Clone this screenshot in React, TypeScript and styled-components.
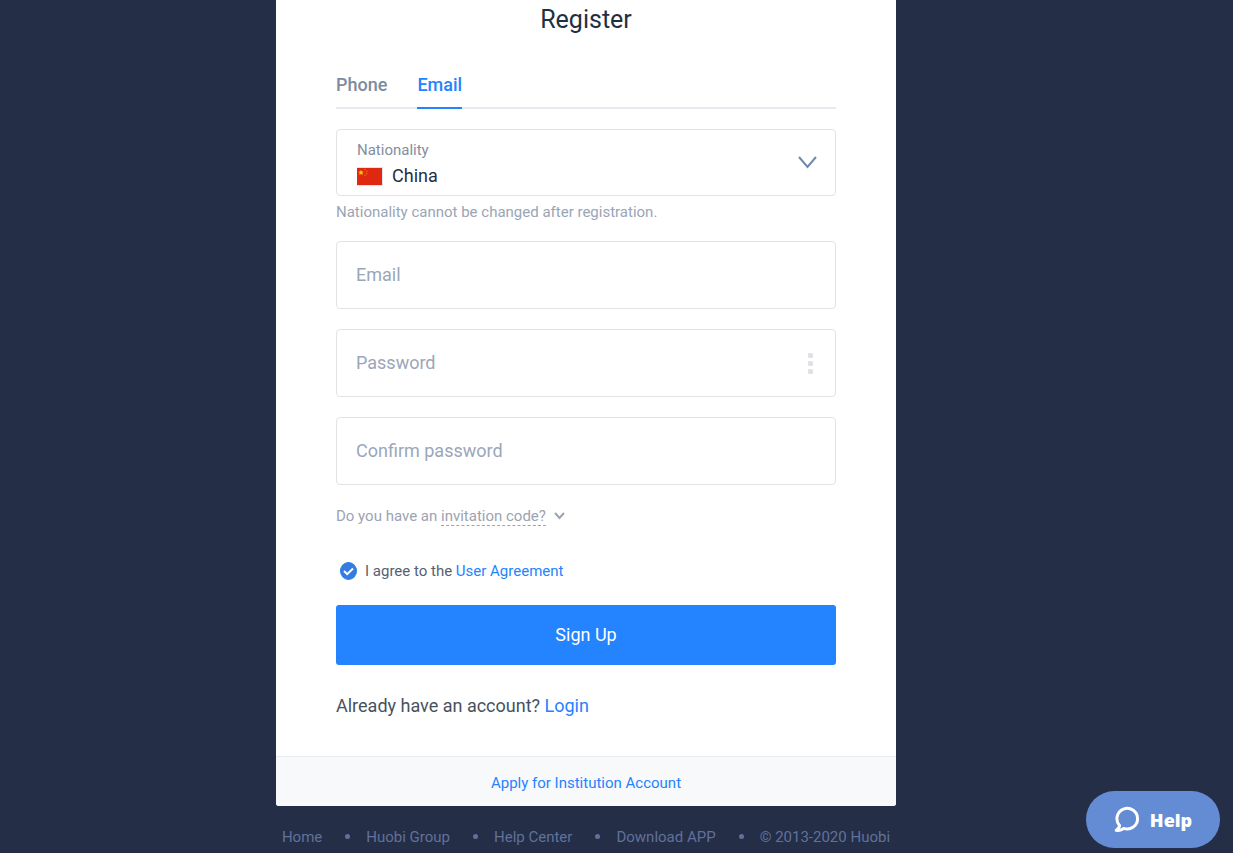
import React, { useState } from "react";
import styled, { createGlobalStyle } from "styled-components";

const GlobalStyle = createGlobalStyle`
  *, *::before, *::after { box-sizing: border-box; }
  body {
    margin: 0;
    background: #242e47;
    font-family: Roboto, "Liberation Sans", sans-serif;
    font-size: 15px;
    line-height: 20px;
    color: #1f3042;
  }
  button, input, select { font: inherit; color: inherit; }
  a { color: #357ce1; text-decoration: none; }
`;

const Page = styled.div`
  display: flex;
  flex-direction: column;
  align-items: center;
  min-height: 100vh;
  padding-right: 61px;
`;

const Card = styled.main`
  width: 100%;
  max-width: 620px;
  background: #fff;
  border-radius: 0 0 3px 3px;
  overflow: hidden;
`;

const Body = styled.div`
  padding: 5px 60px 38px;
`;

const Title = styled.h1`
  margin: 0;
  font-size: 25px;
  line-height: 30px;
  font-weight: 400;
  text-align: center;
`;

const Tabs = styled.div`
  display: flex;
  gap: 30px;
  margin-top: 36px;
  box-shadow: inset 0 -2px #e7ebf0;
`;

const Tab = styled.button<{ $active?: boolean }>`
  padding: 2px 0 11px;
  border: 0;
  border-bottom: 2px solid ${(p) => (p.$active ? "#2483ff" : "transparent")};
  background: none;
  color: ${(p) => (p.$active ? "#2483ff" : "#7d8ba1")};
  font-size: 18px;
  line-height: 23px;
  font-weight: 500;
  cursor: pointer;
`;

const SelectBox = styled.div`
  display: flex;
  align-items: center;
  justify-content: space-between;
  height: 67px;
  margin-top: 20px;
  padding: 0 18px 0 20px;
  border: 1px solid #e1e3e7;
  border-radius: 4px;
`;

const SelectMain = styled.div`
  flex: 1;
  padding-top: 3px;
`;

const FieldLabel = styled.label`
  display: block;
  color: #838ea0;
`;

const CountryRow = styled.div`
  display: flex;
  align-items: center;
  gap: 9px;
  margin-top: 4px;
`;

const CountrySelect = styled.select`
  flex: 1;
  padding: 0;
  border: 0;
  outline: 0;
  background: none;
  appearance: none;
  font-size: 18px;
  line-height: 24px;
`;

const Hint = styled.p`
  margin: 6px 0 19px;
  color: #9aa5b5;
`;

const Fields = styled.div`
  display: flex;
  flex-direction: column;
  gap: 20px;
`;

const Field = styled.div`
  display: flex;
  align-items: center;
  height: 68px;
  padding: 0 22px 0 19px;
  border: 1px solid #e1e3e7;
  border-radius: 4px;
`;

const Input = styled.input`
  flex: 1;
  min-width: 0;
  padding: 0;
  border: 0;
  outline: 0;
  background: none;
  font-size: 18px;
  line-height: 24px;
  &::placeholder { color: #9ba6b9; opacity: 1; }
`;

const Strength = styled.div`
  display: flex;
  flex-direction: column;
  gap: 3px;
`;

const StrengthDot = styled.span`
  width: 5px;
  height: 5px;
  border-radius: 1px;
  background: #dfe2e7;
`;

const InviteToggle = styled.button`
  display: flex;
  align-items: center;
  gap: 8px;
  margin-top: 21px;
  padding: 0;
  border: 0;
  background: none;
  color: #9ca3b2;
  cursor: pointer;
`;

const Dashed = styled.span`
  border-bottom: 1px dashed #9ca3b2;
`;

const Agreement = styled.div`
  display: flex;
  align-items: center;
  gap: 8px;
  margin-top: 35px;
  padding-left: 4px;
  color: #566171;
`;

const CheckWrap = styled.span`
  display: grid;
  width: 17px;
  height: 18px;
  > * { grid-area: 1 / 1; }
  > svg { pointer-events: none; }
`;

const Checkbox = styled.input`
  width: 17px;
  height: 18px;
  margin: 0;
  appearance: none;
  border: 1px solid #357ce1;
  border-radius: 50%;
  &:checked { background: #357ce1; }
`;

const Submit = styled.button`
  display: block;
  width: 100%;
  height: 60px;
  margin-top: 24px;
  border: 0;
  border-radius: 3px;
  background: #2483ff;
  color: #fff;
  font-size: 18px;
  cursor: pointer;
`;

const LoginLine = styled.p`
  margin: 29px 0 0;
  font-size: 18px;
  line-height: 24px;
  color: #465260;
`;

const BrightLink = styled.a`
  color: #2483ff;
`;

const CardFooter = styled.div`
  padding: 16px 0 13px;
  border-top: 1px solid #e7ebf0;
  background: #f8f9fb;
  text-align: center;
`;

const SiteFooter = styled.footer`
  display: flex;
  align-items: center;
  margin-top: 21px;
  color: #61719b;
`;

const FooterLink = styled.a`
  color: inherit;
`;

const Separator = styled.span`
  width: 5px;
  height: 5px;
  margin: 0 16px 2px 23px;
  border-radius: 50%;
  background: #61719b;
`;

const HelpButton = styled.button`
  position: fixed;
  right: 13px;
  bottom: 5px;
  display: flex;
  align-items: center;
  justify-content: center;
  gap: 10px;
  width: 134px;
  height: 57px;
  border: 0;
  border-radius: 29px;
  background: #648cd4;
  color: #fff;
  font-family: "Noto Sans", sans-serif;
  font-size: 18px;
  font-weight: 900;
  cursor: pointer;
`;

const Flag = () => (
  <svg width="26" height="19" viewBox="0 0 26 19" aria-hidden="true">
    <rect width="26" height="19" fill="#dde3ea" />
    <rect x="0" y="1" width="25" height="17" fill="#de2910" />
    <path d="M4 2.800l.8 1.800 2 .1-1.500 1.300.5 2L4 6.900 2.200 8l.5-2-1.500-1.300 2-.1z" fill="#ffc60a" />
    <g fill="#ee6a0c">
      <circle cx="8" cy="2.500" r=".8" />
      <circle cx="9.700" cy="4.300" r=".8" />
      <circle cx="9.700" cy="6.600" r=".8" />
      <circle cx="8" cy="8.300" r=".8" />
    </g>
  </svg>
);

const Chevron = ({ width, height, stroke, color }: { width: number; height: number; stroke: number; color: string }) => (
  <svg width={width} height={height} fill="none" stroke={color} strokeWidth={stroke} aria-hidden="true">
    <path d={`M1 1L${width / 2} ${height - stroke}L${width - 1} 1`} />
  </svg>
);

const footerLinks = ["Home", "Huobi Group", "Help Center", "Download APP"];

export default function App() {
  const [tab, setTab] = useState("Email");
  const [agreed, setAgreed] = useState(true);

  return (
    <>
      <GlobalStyle />
      <Page>
        <Card>
          <Body>
            <Title>Register</Title>
            <Tabs role="tablist">
              {["Phone", "Email"].map((name) => (
                <Tab key={name} role="tab" aria-selected={tab === name} $active={tab === name} onClick={() => setTab(name)}>
                  {name}
                </Tab>
              ))}
            </Tabs>

            <SelectBox>
              <SelectMain>
                <FieldLabel htmlFor="nationality">Nationality</FieldLabel>
                <CountryRow>
                  <Flag />
                  <CountrySelect id="nationality" defaultValue="China">
                    <option>China</option>
                  </CountrySelect>
                </CountryRow>
              </SelectMain>
              <Chevron width={19} height={13} stroke={2} color="#7089ab" />
            </SelectBox>
            <Hint>Nationality cannot be changed after registration.</Hint>

            <Fields>
              <Field>
                <Input type="email" aria-label="Email" placeholder="Email" />
              </Field>
              <Field>
                <Input type="password" aria-label="Password" placeholder="Password" />
                <Strength>
                  <StrengthDot />
                  <StrengthDot />
                  <StrengthDot />
                </Strength>
              </Field>
              <Field>
                <Input type="password" aria-label="Confirm password" placeholder="Confirm password" />
              </Field>
            </Fields>

            <InviteToggle type="button">
              <span>
                Do you have an <Dashed>invitation code?</Dashed>
              </span>
              <Chevron width={11} height={8} stroke={2} color="#9ca3b2" />
            </InviteToggle>

            <Agreement>
              <CheckWrap>
                <Checkbox id="agree" type="checkbox" checked={agreed} onChange={(e) => setAgreed(e.target.checked)} />
                <svg width="17" height="18" viewBox="0 0 17 18" fill="none" stroke="#fff" strokeWidth="2" aria-hidden="true">
                  <path d="M4 9l3.200 3.200L13 6.500" />
                </svg>
              </CheckWrap>
              <span>
                <label htmlFor="agree">I agree to the </label>
                <BrightLink href="#agreement">User Agreement</BrightLink>
              </span>
            </Agreement>

            <Submit type="submit">Sign Up</Submit>
            <LoginLine>
              Already have an account? <BrightLink href="#login">Login</BrightLink>
            </LoginLine>
          </Body>
          <CardFooter>
            <BrightLink href="#institution">Apply for Institution Account</BrightLink>
          </CardFooter>
        </Card>

        <SiteFooter>
          {footerLinks.map((name) => (
            <React.Fragment key={name}>
              <FooterLink href="#">{name}</FooterLink>
              <Separator />
            </React.Fragment>
          ))}
          <span>© 2013-2020 Huobi</span>
        </SiteFooter>
      </Page>

      <HelpButton type="button">
        <svg width="26" height="27" viewBox="0 0 26 27" fill="none" stroke="#fff" strokeWidth="3" strokeLinejoin="round" aria-hidden="true">
          <path d="M5.600 19.600A10.300 10.300 0 1 1 9.800 22.400C8 24 5 24.800 2.200 24.300C4.200 23.200 5.300 21.500 5.600 19.600Z" />
        </svg>
        Help
      </HelpButton>
    </>
  );
}
